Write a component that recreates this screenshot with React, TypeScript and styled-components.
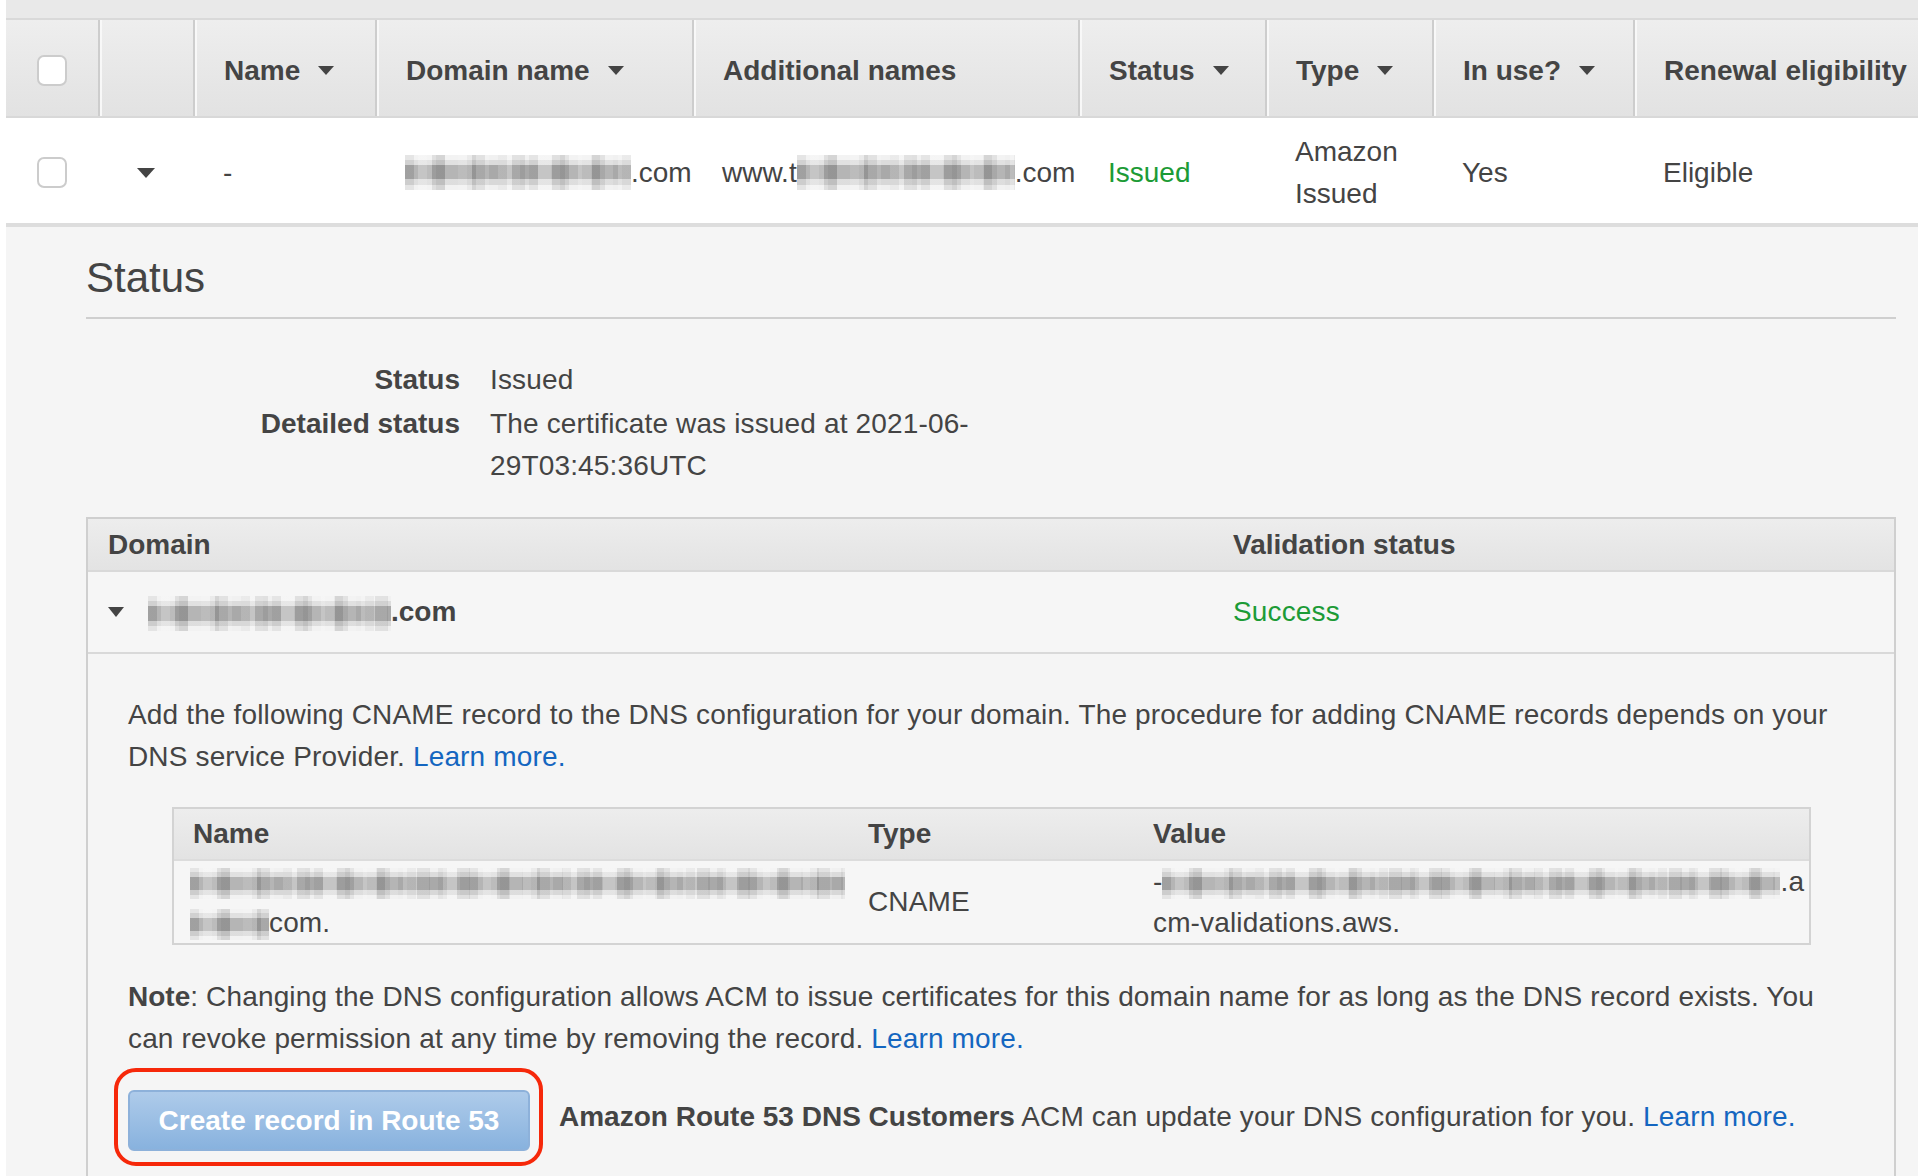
import React from "react";
import styled, { createGlobalStyle } from "styled-components";

const Global = createGlobalStyle`
  *, *::before, *::after { box-sizing: border-box; }
  html, body { margin: 0; padding: 0; background: #ffffff; }
  body {
    font-family: "Liberation Sans", Arial, Helvetica, sans-serif;
    color: #444444;
    font-size: 28px;
    line-height: 42px;
    width: 1918px;
    overflow: hidden;
  }
`;

const Page = styled.div`
  padding-left: 6px;
  width: 1918px;
  overflow: hidden;
`;

const TopStrip = styled.div`
  height: 20px;
  background: #e9e9e9;
  border-bottom: 2px solid #d9d9d9;
`;

const COLS = "92px 95px 182px 317px 386px 187px 167px 201px 285px";

const HeadRow = styled.div`
  display: grid;
  grid-template-columns: ${COLS};
  height: 98px;
  background: linear-gradient(180deg, #eeeeee 0%, #e2e2e2 100%);
  border-bottom: 2px solid #d8d8d8;
`;

const HeadCell = styled.div<{ $center?: boolean }>`
  display: flex;
  align-items: center;
  justify-content: ${(p) => (p.$center ? "center" : "flex-start")};
  gap: 18px;
  padding-left: ${(p) => (p.$center ? "0" : "29px")};
  padding-top: 5px;
  font-weight: bold;
  white-space: nowrap;
  border-left: 2px solid #cdcdcd;
  box-shadow: inset 2px 0 0 #f8f8f8;
  &:first-child {
    border-left: none;
    box-shadow: none;
  }
`;

const BodyRow = styled.div`
  display: grid;
  grid-template-columns: ${COLS};
  height: 109px;
  background: #ffffff;
  border-bottom: 4px solid #dddddd;
`;

const BodyCell = styled.div<{ $center?: boolean; $tone?: "ok" }>`
  display: flex;
  align-items: center;
  justify-content: ${(p) => (p.$center ? "center" : "flex-start")};
  padding-left: ${(p) => (p.$center ? "0" : "30px")};
  padding-top: 4px;
  white-space: ${(p) => (p.$center ? "normal" : "nowrap")};
  color: ${(p) => (p.$tone === "ok" ? "#1c9b36" : "#444444")};
`;

const WrapCell = styled(BodyCell)`
  white-space: normal;
  padding-right: 20px;
`;

const Checkbox = styled.span`
  display: inline-block;
  width: 30px;
  height: 31px;
  border: 2px solid #cccccc;
  border-radius: 7px;
  background: #ffffff;
`;

const Caret = styled.span<{ $w: number; $h: number }>`
  display: inline-block;
  width: 0;
  height: 0;
  border-left: ${(p) => p.$w / 2}px solid transparent;
  border-right: ${(p) => p.$w / 2}px solid transparent;
  border-top: ${(p) => p.$h}px solid #444444;
`;

const Mosaic = styled.span<{ $w: number; $h: number }>`
  display: inline-block;
  vertical-align: middle;
  width: ${(p) => p.$w}px;
  height: ${(p) => p.$h}px;
  background-image:
    repeating-linear-gradient(
      90deg,
      rgba(255, 255, 255, 0) 0 13px,
      rgba(255, 255, 255, 0.22) 13px 27px,
      rgba(0, 0, 0, 0.07) 27px 40px
    ),
    repeating-linear-gradient(
      90deg,
      rgba(0, 0, 0, 0.05) 0 9px,
      rgba(255, 255, 255, 0.14) 9px 22px,
      rgba(0, 0, 0, 0) 22px 31px
    ),
    linear-gradient(
      180deg,
      #f1f1f1 0 14%,
      #dcdcdc 14% 28%,
      #a9a9a9 28% 70%,
      #d8d8d8 70% 86%,
      #f0f0f0 86% 100%
    );
`;

const Detail = styled.div`
  background: #f5f5f5;
  padding: 26px 22px 0 80px;
  letter-spacing: 0.15px;
`;

const SectionTitle = styled.h2`
  margin: 0;
  font-size: 42px;
  line-height: 50px;
  font-weight: normal;
  letter-spacing: 0;
  padding-bottom: 14px;
  border-bottom: 2px solid #cfcfcf;
`;

const KV = styled.div`
  display: grid;
  grid-template-columns: 374px 560px;
  column-gap: 30px;
  row-gap: 2px;
  margin-top: 40px;
`;

const KLabel = styled.div`
  text-align: right;
  font-weight: bold;
  letter-spacing: 0;
`;

const KValue = styled.div``;

const DomainTable = styled.div`
  margin-top: 30px;
  border: 2px solid #cfcfcf;
  border-bottom: none;
`;

const DGrid = styled.div<{ $head?: boolean }>`
  display: grid;
  grid-template-columns: 1125px 1fr;
  height: ${(p) => (p.$head ? "53px" : "82px")};
  background: ${(p) =>
    p.$head ? "linear-gradient(180deg, #ededed 0%, #e3e3e3 100%)" : "#f6f6f6"};
  border-bottom: 2px solid #d9d9d9;
  font-weight: ${(p) => (p.$head ? "bold" : "normal")};
  letter-spacing: ${(p) => (p.$head ? "0" : "0.15px")};
`;

const DCell = styled.div<{ $tone?: "ok" }>`
  display: flex;
  align-items: center;
  gap: 24px;
  padding-left: 20px;
  color: ${(p) => (p.$tone === "ok" ? "#1c9b36" : "#444444")};
`;

const DomainName = styled.span`
  font-weight: bold;
  white-space: nowrap;
  letter-spacing: 0;
`;

const Expand = styled.div`
  padding: 40px 40px 80px 40px;
`;

const Para = styled.p<{ $gap?: number }>`
  margin: ${(p) => p.$gap ?? 0}px 0 0 0;
`;

const Link = styled.a`
  color: #1466c0;
  text-decoration: none;
`;

const RecordTable = styled.div`
  margin: 29px 43px 0 44px;
  border: 2px solid #d3d3d3;
`;

const RGrid = styled.div<{ $head?: boolean }>`
  display: grid;
  grid-template-columns: 674px 285px 1fr;
  height: ${(p) => (p.$head ? "52px" : "82px")};
  background: ${(p) =>
    p.$head ? "linear-gradient(180deg, #ededed 0%, #e3e3e3 100%)" : "#f6f6f6"};
  border-bottom: ${(p) => (p.$head ? "2px solid #dcdcdc" : "none")};
  font-weight: ${(p) => (p.$head ? "bold" : "normal")};
  letter-spacing: ${(p) => (p.$head ? "0" : "0.15px")};
`;

const RCell = styled.div<{ $pad?: number }>`
  display: flex;
  align-items: center;
  padding-left: ${(p) => p.$pad ?? 20}px;
`;

const RText = styled.div<{ $pad?: number }>`
  padding-left: ${(p) => p.$pad ?? 20}px;
  line-height: 41px;
  word-break: break-all;
`;

const ActionRow = styled.div`
  display: flex;
  align-items: center;
  gap: 16px;
  margin-top: 8px;
  margin-left: -14px;
`;

const Highlight = styled.div`
  border: 4px solid #f6280a;
  border-radius: 22px;
  padding: 18px 9px 11px 10px;
`;

const PrimaryButton = styled.button`
  display: block;
  width: 402px;
  height: 61px;
  border: 2px solid #8db1da;
  border-radius: 6px;
  background: linear-gradient(180deg, #aecbea 0%, #88b2de 100%);
  color: #ffffff;
  font-family: "Liberation Sans", Arial, Helvetica, sans-serif;
  font-size: 28px;
  font-weight: bold;
  letter-spacing: 0;
  padding: 0;
  cursor: pointer;
`;

const Strong = styled.b`
  font-weight: bold;
  letter-spacing: 0;
`;

export default function App() {
  return (
    <>
      <Global />
      <Page>
        <TopStrip />
        <HeadRow>
          <HeadCell $center>
            <Checkbox />
          </HeadCell>
          <HeadCell $center />
          <HeadCell>
            Name <Caret $w={16} $h={9} />
          </HeadCell>
          <HeadCell>
            Domain name <Caret $w={16} $h={9} />
          </HeadCell>
          <HeadCell>Additional names</HeadCell>
          <HeadCell>
            Status <Caret $w={16} $h={9} />
          </HeadCell>
          <HeadCell>
            Type <Caret $w={16} $h={9} />
          </HeadCell>
          <HeadCell>
            In use? <Caret $w={16} $h={9} />
          </HeadCell>
          <HeadCell>Renewal eligibility</HeadCell>
        </HeadRow>
        <BodyRow>
          <BodyCell $center>
            <Checkbox />
          </BodyCell>
          <BodyCell $center>
            <Caret $w={18} $h={10} />
          </BodyCell>
          <BodyCell>-</BodyCell>
          <BodyCell>
            <Mosaic $w={226} $h={35} />
            .com
          </BodyCell>
          <BodyCell>
            www.t
            <Mosaic $w={218} $h={35} />
            .com
          </BodyCell>
          <BodyCell $tone="ok">Issued</BodyCell>
          <WrapCell>Amazon Issued</WrapCell>
          <BodyCell>Yes</BodyCell>
          <BodyCell>Eligible</BodyCell>
        </BodyRow>
        <Detail>
          <SectionTitle>Status</SectionTitle>
          <KV>
            <KLabel>Status</KLabel>
            <KValue>Issued</KValue>
            <KLabel>Detailed status</KLabel>
            <KValue>The certificate was issued at 2021-06-29T03:45:36UTC</KValue>
          </KV>
          <DomainTable>
            <DGrid $head>
              <DCell>Domain</DCell>
              <DCell>Validation status</DCell>
            </DGrid>
            <DGrid>
              <DCell>
                <Caret $w={16} $h={10} />
                <DomainName>
                  <Mosaic $w={243} $h={35} />
                  .com
                </DomainName>
              </DCell>
              <DCell $tone="ok">Success</DCell>
            </DGrid>
            <Expand>
              <Para>
                Add the following CNAME record to the DNS configuration for your domain. The
                procedure for adding CNAME records depends on your DNS service Provider.{" "}
                <Link href="#">Learn more.</Link>
              </Para>
              <RecordTable>
                <RGrid $head>
                  <RCell $pad={19}>Name</RCell>
                  <RCell>Type</RCell>
                  <RCell>Value</RCell>
                </RGrid>
                <RGrid>
                  <RText $pad={16}>
                    <Mosaic $w={655} $h={31} />
                    <br />
                    <Mosaic $w={79} $h={31} />
                    com.
                  </RText>
                  <RCell>CNAME</RCell>
                  <RText>
                    -<Mosaic $w={618} $h={31} />
                    .a
                    <br />
                    cm-validations.aws.
                  </RText>
                </RGrid>
              </RecordTable>
              <Para $gap={31}>
                <Strong>Note</Strong>: Changing the DNS configuration allows ACM to issue
                certificates for this domain name for as long as the DNS record exists. You can
                revoke permission at any time by removing the record.{" "}
                <Link href="#">Learn more.</Link>
              </Para>
              <ActionRow>
                <Highlight>
                  <PrimaryButton type="button">Create record in Route 53</PrimaryButton>
                </Highlight>
                <span>
                  <Strong>Amazon Route 53 DNS Customers</Strong> ACM can update your DNS
                  configuration for you. <Link href="#">Learn more.</Link>
                </span>
              </ActionRow>
            </Expand>
          </DomainTable>
        </Detail>
      </Page>
    </>
  );
}
